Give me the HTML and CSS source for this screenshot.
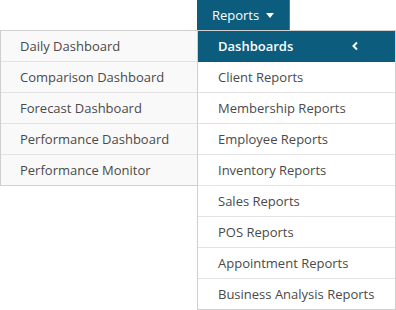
FILE: index.html
```html
<!DOCTYPE html>
<html lang="en">
<head>
    <meta charset="UTF-8">
    <title>Reports Menu</title>
    <link rel="stylesheet" href="styles.css">
</head>
<body>

<div class="nav">
    <button class="nav-button">Reports <span class="caret"></span></button>
</div>

<div class="menus">
    <ul class="submenu">
        <li>Daily Dashboard</li>
        <li>Comparison Dashboard</li>
        <li>Forecast Dashboard</li>
        <li>Performance Dashboard</li>
        <li>Performance Monitor</li>
    </ul>

    <ul class="menu">
        <li class="active">Dashboards
            <svg class="chevron" width="8" height="10" viewBox="0 0 8 10"><path d="M6 1.5 L2.5 5 L6 8.5" fill="none" stroke="#fff" stroke-width="2"/></svg>
        </li>
        <li>Client Reports</li>
        <li>Membership Reports</li>
        <li>Employee Reports</li>
        <li>Inventory Reports</li>
        <li>Sales Reports</li>
        <li>POS Reports</li>
        <li>Appointment Reports</li>
        <li>Business Analysis Reports</li>
    </ul>
</div>

</body>
</html>
```

FILE: styles.css
```css
body {
    font-family: "Open Sans", "Noto Sans", sans-serif;
    font-size: 13px;
    color: #4a4a4a;
    background-color: white;
    margin: 0;
    padding: 0;
}
.nav {
    display: flex;
    padding-left: 197px;
    height: 30px;
}
.nav-button {
    width: 93px;
    height: 30px;
    background-color: #0b5c7d;
    color: white;
    border: none;
    border-right: 1px solid #1e8cc4;
    font-family: inherit;
    font-size: 13px;
    padding: 0;
    display: flex;
    align-items: center;
    justify-content: center;
    gap: 7px;
}
.caret {
    width: 0;
    height: 0;
    border-left: 4px solid transparent;
    border-right: 4px solid transparent;
    border-top: 5px solid white;
}
.menus {
    display: flex;
    align-items: flex-start;
}
.menus ul {
    list-style: none;
    margin: 0;
    padding: 0;
}
.menus li {
    height: 30px;
    line-height: 30px;
    padding-left: 19px;
    border-bottom: 1px solid #e3e3e3;
}
.menus li:last-child {
    border-bottom: none;
}
.submenu {
    width: 196px;
    margin-left: 1px;
    border: 1px solid #cfcfcf;
    border-right: none;
    background-color: #f9f9f9;
}
.menu {
    flex: 1;
    border: 1px solid #cfcfcf;
    background-color: white;
}
.menu li {
    padding-left: 20px;
}
.menu li.active {
    display: flex;
    justify-content: space-between;
    align-items: center;
    padding-right: 36px;
    background-color: #0b5c7d;
    border-bottom-color: #0b5c7d;
    color: white;
    font-weight: 600;
}
```
